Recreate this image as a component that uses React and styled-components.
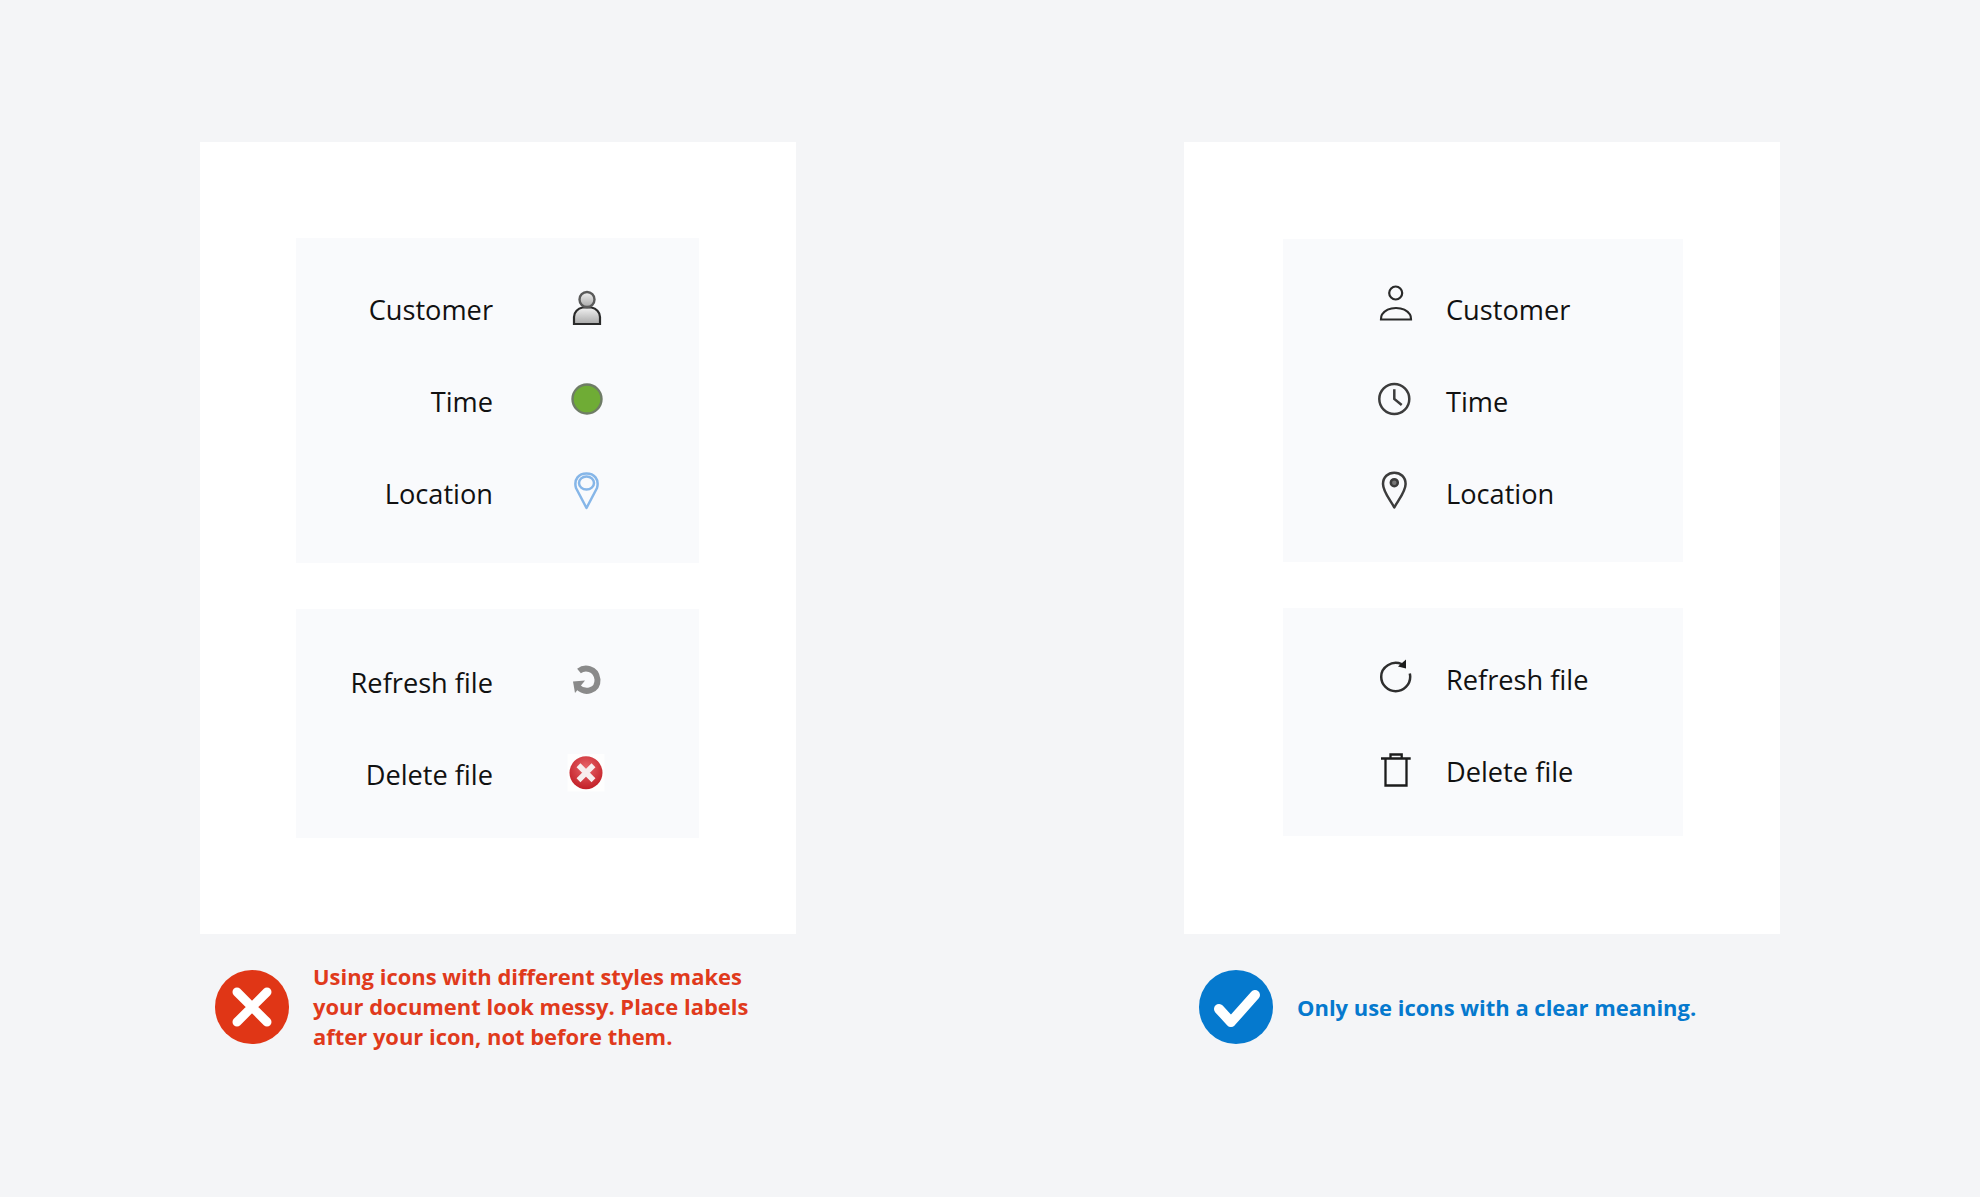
import React from 'react';
import styled, { createGlobalStyle } from 'styled-components';

const GlobalStyle = createGlobalStyle`
  html, body {
    margin: 0;
    padding: 0;
    background: #f4f5f7;
  }
`;

const Page = styled.div`
  box-sizing: border-box;
  height: 1197px;
  padding: 142px 0 0 200px;
  display: grid;
  grid-template-columns: 596px 596px;
  column-gap: 388px;
  align-items: start;
  background: #f4f5f7;
  overflow: hidden;
`;

const Column = styled.section`
  display: flex;
  flex-direction: column;
`;

const Card = styled.div`
  box-sizing: border-box;
  width: 596px;
  height: 792px;
  padding: ${(p) => p.$top}px 0 0 ${(p) => p.$left}px;
  background: #ffffff;
  display: flex;
  flex-direction: column;
  gap: 46px;
`;

const Panel = styled.div`
  box-sizing: border-box;
  width: ${(p) => p.$width}px;
  height: ${(p) => p.$height}px;
  padding-top: ${(p) => p.$pad}px;
  background: #f9fafc;
  display: flex;
  flex-direction: column;
`;

const BadRow = styled.div`
  height: 92px;
  display: grid;
  grid-template-columns: 197px 44px;
  column-gap: 72px;
  align-items: center;
`;

const GoodRow = styled.div`
  height: 92px;
  padding-left: 90px;
  display: grid;
  grid-template-columns: 44px auto;
  column-gap: 29px;
  align-items: center;
  justify-content: start;
`;

const Label = styled.span`
  font-family: 'Open Sans', 'Liberation Sans', sans-serif;
  font-size: 27.2px;
  line-height: 36px;
  color: #111111;
  text-align: ${(p) => p.$align || 'left'};
`;

const IconBox = styled.svg`
  display: block;
  width: 44px;
  height: 44px;
  overflow: visible;
`;

const SoftIcon = styled(IconBox)`
  filter: blur(0.6px);
`;

const Caption = styled.div`
  display: flex;
  align-items: center;
  gap: ${(p) => p.$gap}px;
  margin: 36px 0 0 ${(p) => p.$left}px;
  height: 74px;
`;

const Badge = styled.svg`
  display: block;
  width: 74px;
  height: 74px;
  flex: none;
`;

const CaptionText = styled.p`
  margin: ${(p) => p.$drop || 0}px 0 0;
  font-family: 'Open Sans', 'Liberation Sans', sans-serif;
  font-weight: 700;
  font-size: 21.95px;
  line-height: 30px;
  color: ${(p) => p.$color};
`;

const PersonOld = () => (
  <SoftIcon viewBox="0 0 44 44">
    <defs>
      <linearGradient id="oldGrey" x1="0" y1="0" x2="0" y2="1">
        <stop offset="0" stopColor="#f2f2f2" />
        <stop offset="1" stopColor="#a8a8a8" />
      </linearGradient>
    </defs>
    <g transform="translate(0 -1)">
      <path d="M9 37V30c0-5 4-8.500 8.500-9.500h9c4.500 1 8.500 4.500 8.500 9.500v7z" fill="url(#oldGrey)" stroke="#2a2a2a" strokeWidth="2.200" />
      <circle cx="22" cy="12.500" r="7.500" fill="url(#oldGrey)" stroke="#5a5a5a" strokeWidth="2.400" />
    </g>
  </SoftIcon>
);

const DotOld = () => (
  <SoftIcon viewBox="0 0 44 44">
    <circle cx="22" cy="19" r="14.500" fill="#6fac35" stroke="#6f7c66" strokeWidth="2.400" />
  </SoftIcon>
);

const PinOld = () => (
  <SoftIcon viewBox="0 0 44 44">
    <path d="M21.500 36L11 16C8.500 7 14 1.500 21.500 1.500S34.500 7 32 16z" fill="none" stroke="#86b6e8" strokeWidth="2.500" strokeLinejoin="round" />
    <ellipse cx="21.500" cy="11" rx="7.500" ry="6.500" fill="none" stroke="#86b6e8" strokeWidth="2.500" />
  </SoftIcon>
);

const RefreshOld = () => (
  <SoftIcon viewBox="0 0 44 44">
    <g transform="translate(0 -1)">
      <path d="M14 11C19 7 31 7 32.500 19.500C33 31 20 34 13 27" fill="none" stroke="#8a8a8a" strokeWidth="6" />
      <path d="M8 21.500L20 20.500L10 33z" fill="#8a8a8a" />
    </g>
  </SoftIcon>
);

const DeleteOld = () => (
  <SoftIcon viewBox="0 0 44 44">
    <defs>
      <radialGradient id="oldRed" cx="0.5" cy="0.35" r="0.7">
        <stop offset="0" stopColor="#e8656a" />
        <stop offset="1" stopColor="#bf1a22" />
      </radialGradient>
    </defs>
    <rect x="2.500" y="1" width="37" height="37.500" fill="#fefefe" />
    <circle cx="21" cy="19.700" r="16.500" fill="url(#oldRed)" />
    <path d="M13.500 12.200L28.500 27.200M28.500 12.200L13.500 27.200" stroke="#f7eeee" strokeWidth="5.500" />
  </SoftIcon>
);

const PersonLine = () => (
  <SoftIcon viewBox="0 0 44 44">
    <g transform="translate(0 -1)">
      <circle cx="22.700" cy="6" r="6.500" fill="none" stroke="#2a2a2a" strokeWidth="2.200" />
      <path d="M8 32.500h30c0-1.500 0-3.500-1-5C34 23 28 21 23 21s-11 2-14 6.500c-1 1.500-1 3.500-1 5z" fill="none" stroke="#2a2a2a" strokeWidth="2.200" />
    </g>
  </SoftIcon>
);

const ClockLine = () => (
  <SoftIcon viewBox="0 0 44 44">
    <circle cx="21.300" cy="19" r="15" fill="none" stroke="#3c3c3c" strokeWidth="2.500" />
    <path d="M21.300 9.300V19L28.700 25" fill="none" stroke="#3c3c3c" strokeWidth="2.500" />
  </SoftIcon>
);

const PinLine = () => (
  <SoftIcon viewBox="0 0 44 44">
    <g transform="translate(0 -1)">
      <path d="M21.300 36.500C18 30 10 21 10 13C10 6 15 1.700 21.300 1.700S32.600 6 32.600 13C32.600 21 24.600 30 21.300 36.500z" fill="none" stroke="#3c3c3c" strokeWidth="2.500" strokeLinejoin="round" />
      <circle cx="21.300" cy="11.700" r="3.500" fill="#777777" stroke="#3c3c3c" strokeWidth="2.500" />
    </g>
  </SoftIcon>
);

const RefreshLine = () => (
  <SoftIcon viewBox="0 0 44 44">
    <path d="M28.700 6.200C19 2 8.200 9 8.200 18.700C8.200 26.700 14.700 33.200 22.700 33.200S37.200 26.700 37.200 18.700C37.200 17.500 37 16.500 36.800 15.500" fill="none" stroke="#2e2e2e" strokeWidth="2.500" />
    <path d="M33 1.500V10.500L25 8.500z" fill="#1c1c1c" />
  </SoftIcon>
);

const TrashLine = () => (
  <SoftIcon viewBox="0 0 44 44">
    <path d="M8 8.500H37.700M12.500 8.500V35.500H33.500V8.500M17.500 8.500V4.500H28.700V8.500" fill="none" stroke="#1c1c1c" strokeWidth="2.300" />
  </SoftIcon>
);

const CrossBadge = () => (
  <Badge viewBox="0 0 74 74">
    <circle cx="37" cy="37" r="37" fill="#e03616" />
    <path d="M22 22L52 52M52 22L22 52" stroke="#ffffff" strokeWidth="9" strokeLinecap="round" />
  </Badge>
);

const CheckBadge = () => (
  <Badge viewBox="0 0 74 74">
    <circle cx="37" cy="37" r="37" fill="#0579ce" />
    <path d="M20 39L32 52L56 25" fill="none" stroke="#ffffff" strokeWidth="10" strokeLinecap="round" strokeLinejoin="round" />
  </Badge>
);

export default function App() {
  return (
    <>
      <GlobalStyle />
      <Page>
        <Column>
          <Card $top={96} $left={96}>
            <Panel $width={403} $height={325} $pad={26}>
              <BadRow><Label $align="right">Customer</Label><PersonOld /></BadRow>
              <BadRow><Label $align="right">Time</Label><DotOld /></BadRow>
              <BadRow><Label $align="right">Location</Label><PinOld /></BadRow>
            </Panel>
            <Panel $width={403} $height={229} $pad={28}>
              <BadRow><Label $align="right">Refresh file</Label><RefreshOld /></BadRow>
              <BadRow><Label $align="right">Delete file</Label><DeleteOld /></BadRow>
            </Panel>
          </Card>
          <Caption $left={15} $gap={24}>
            <CrossBadge />
            <CaptionText $color="#e03a1c">
              Using icons with different styles makes<br />
              your document look messy. Place labels<br />
              after your icon, not before them.
            </CaptionText>
          </Caption>
        </Column>
        <Column>
          <Card $top={97} $left={99}>
            <Panel $width={400} $height={323} $pad={25}>
              <GoodRow><PersonLine /><Label>Customer</Label></GoodRow>
              <GoodRow><ClockLine /><Label>Time</Label></GoodRow>
              <GoodRow><PinLine /><Label>Location</Label></GoodRow>
            </Panel>
            <Panel $width={400} $height={228} $pad={26}>
              <GoodRow><RefreshLine /><Label>Refresh file</Label></GoodRow>
              <GoodRow><TrashLine /><Label>Delete file</Label></GoodRow>
            </Panel>
          </Card>
          <Caption $left={15} $gap={24}>
            <CheckBadge />
            <CaptionText $color="#0579ce" $drop={2}>Only use icons with a clear meaning.</CaptionText>
          </Caption>
        </Column>
      </Page>
    </>
  );
}
